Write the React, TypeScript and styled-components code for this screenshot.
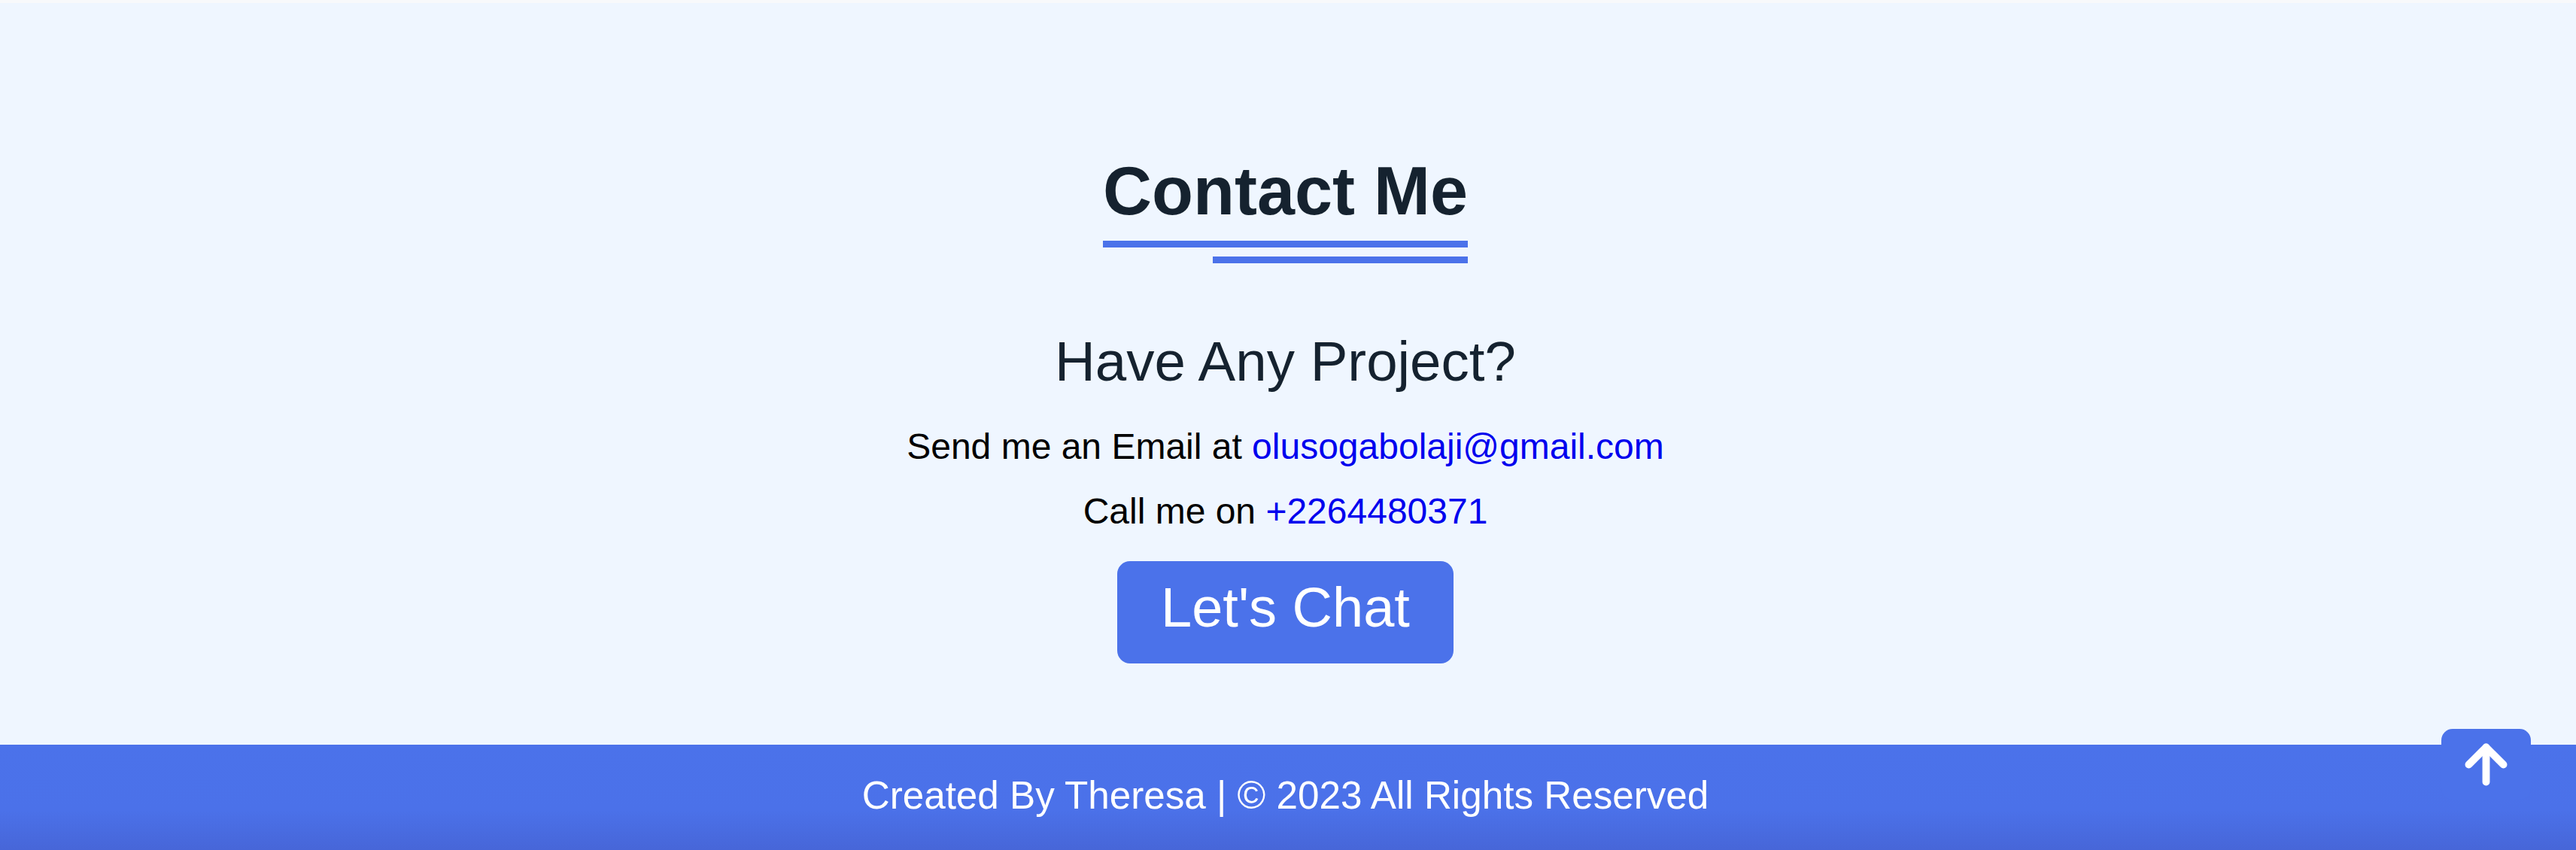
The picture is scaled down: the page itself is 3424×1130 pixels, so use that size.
import React from "react";
import styled, { createGlobalStyle } from "styled-components";

const GlobalStyle = createGlobalStyle`
  html, body {
    margin: 0;
    padding: 0;
    background: #eff6ff;
  }
  body {
    font-family: "Liberation Sans", Arial, Helvetica, sans-serif;
  }
  * { box-sizing: border-box; }
`;

const Page = styled.div`
  display: flex;
  flex-direction: column;
  min-height: 100vh;
  border-top: 4px solid #f8f9fb;
`;

const Section = styled.section`
  display: flex;
  flex-direction: column;
  align-items: center;
  background: #eff6ff;
  padding: 200px 7px 108px 0;
`;

const TitleBlock = styled.div`
  display: inline-flex;
  flex-direction: column;
  align-items: flex-end;
`;

const Title = styled.h2`
  margin: 0;
  font-size: 90px;
  line-height: 100px;
  font-weight: 700;
  color: #15222f;
`;

const Bar = styled.span<{ $w: string; $mt: number }>`
  display: block;
  width: ${(p) => p.$w};
  height: 9px;
  margin-top: ${(p) => p.$mt}px;
  background: #4b72ea;
`;

const Subtitle = styled.h3`
  margin: 88px 0 0;
  font-size: 74.5px;
  line-height: 86px;
  font-weight: 400;
  color: #15222f;
`;

const InfoLine = styled.p<{ $mt: number }>`
  margin: ${(p) => p.$mt}px 0 0;
  font-size: 48px;
  line-height: 86px;
  color: #000;
`;

const Link = styled.a`
  color: #0000ee;
  text-decoration: none;
`;

const ChatButton = styled.a`
  display: inline-block;
  margin-top: 23px;
  height: 136px;
  padding: 19px 58px 31px;
  font-size: 74px;
  line-height: 86px;
  color: #fff;
  background: #4b72ea;
  border-radius: 17px;
  text-decoration: none;
`;

const Footer = styled.footer`
  height: 140px;
  padding: 39px 7px 0 0;
  text-align: center;
  font-size: 51.2px;
  line-height: 58px;
  color: #fff;
  background: linear-gradient(to bottom, #4b72ea 0%, #4b71e9 62%, #4766d8 100%);
`;

const ScrollTop = styled.a`
  position: fixed;
  right: 60px;
  bottom: 67px;
  width: 119px;
  height: 94px;
  display: flex;
  align-items: center;
  justify-content: center;
  background: #4b72ea;
  border-radius: 15px;
`;

export default function App() {
  return (
    <>
      <GlobalStyle />
      <Page>
        <Section>
          <TitleBlock>
            <Title>Contact Me</Title>
            <Bar $w="100%" $mt={16} />
            <Bar $w="70%" $mt={12} />
          </TitleBlock>
          <Subtitle>Have Any Project?</Subtitle>
          <InfoLine $mt={27}>
            Send me an Email at <Link href="#">olusogabolaji@gmail.com</Link>
          </InfoLine>
          <InfoLine $mt={0}>
            Call me on <Link href="#">+2264480371</Link>
          </InfoLine>
          <ChatButton href="#">Let's Chat</ChatButton>
        </Section>
        <Footer>Created By Theresa | © 2023 All Rights Reserved</Footer>
      </Page>
      <ScrollTop href="#">
        <svg
          width="79"
          height="79"
          viewBox="0 0 24 24"
          fill="none"
          stroke="#fff"
          strokeWidth="3"
          strokeLinecap="round"
          strokeLinejoin="round"
        >
          <path d="m5 12 7-7 7 7" />
          <path d="M12 19V5" />
        </svg>
      </ScrollTop>
    </>
  );
}
